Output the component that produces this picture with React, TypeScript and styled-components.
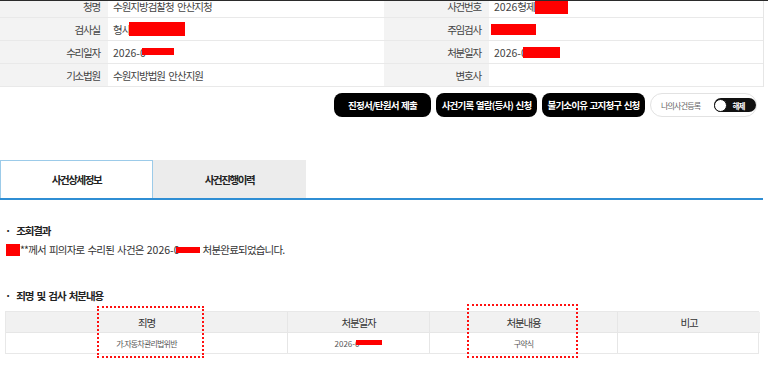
import { Fragment, type ReactNode } from 'react';
import styled, { createGlobalStyle } from 'styled-components';

const GlobalStyle = createGlobalStyle`
  body {
    margin: 0;
    background: #fff;
    font-family: 'Noto Sans CJK KR', 'Noto Sans', sans-serif;
    color: #333;
  }
`;

const Page = styled.div`
  position: relative;
  width: 768px;
  height: 376px;
  overflow: hidden;
  border-top: 1px solid #2b2b2b;
  box-sizing: border-box;
`;

const InfoTable = styled.div`
  display: grid;
  grid-template-columns: 108px 276px 105px 274px;
  width: 764px;
  margin-top: -6px;
  border-right: 1px solid #e6e6e6;
  box-sizing: border-box;
`;

const Label = styled.div`
  height: 22px;
  border-bottom: 1px solid #e9e9e9;
  background: #f3f3f3;
  display: flex;
  align-items: center;
  justify-content: flex-end;
  padding-right: 8px;
  font-size: 10.5px;
  letter-spacing: -1.2px;
  color: #444;
`;

const Value = styled.div`
  height: 22px;
  border-bottom: 1px solid #e9e9e9;
  display: flex;
  align-items: center;
  padding-left: 5px;
  font-size: 10.5px;
  letter-spacing: -1px;
  word-spacing: 2px;
  color: #444;
  white-space: pre;
`;

// digits keep their natural spacing
const Num = styled.span`
  letter-spacing: 0;
`;

const Redact = styled.span<{ $w: number; $h: number; $shift?: number; $dy?: number }>`
  display: inline-block;
  width: ${(p) => p.$w}px;
  height: ${(p) => p.$h}px;
  background: #ff0000;
  margin-left: ${(p) => p.$shift ?? 0}px;
  position: relative;
  top: ${(p) => p.$dy ?? 0}px;
  vertical-align: middle;
`;

const ActionBar = styled.div`
  display: flex;
  justify-content: flex-end;
  align-items: center;
  gap: 5px;
  padding: 6px 11px 0 0;
`;

const BlackButton = styled.button<{ $w: number }>`
  width: ${(p) => p.$w}px;
  height: 24px;
  padding: 0;
  border: none;
  border-radius: 8px;
  background: #000;
  color: #fff;
  font-family: inherit;
  font-size: 9.5px;
  font-weight: 700;
  letter-spacing: -0.8px;
  word-spacing: 1px;
  white-space: nowrap;
`;

const RegisterBox = styled.div`
  height: 24px;
  width: 107px;
  box-sizing: border-box;
  border: 1px solid #e2e2e2;
  border-radius: 12px;
  display: flex;
  align-items: center;
  padding-left: 10px;
  gap: 14px;
  font-size: 8px;
  letter-spacing: -0.8px;
  color: #666;
  white-space: nowrap;
`;

const Switch = styled.div`
  width: 43px;
  height: 14px;
  border-radius: 7px;
  background: #111;
  display: flex;
  align-items: center;
  box-sizing: border-box;
  gap: 5px;
`;

const Knob = styled.span`
  width: 13px;
  height: 13px;
  border-radius: 50%;
  background: #fff;
  border: 1px solid #111;
  box-sizing: border-box;
`;

const SwitchText = styled.span`
  color: #fff;
  font-size: 7.5px;
  font-weight: 700;
`;

const Tabs = styled.div`
  display: flex;
  width: 763px;
  margin-top: 43px;
  border-bottom: 2px solid #2f8ed4;
`;

const Tab = styled.div<{ $active?: boolean }>`
  width: 153px;
  height: 38px;
  box-sizing: border-box;
  display: flex;
  align-items: center;
  justify-content: center;
  font-size: 10.5px;
  font-weight: 700;
  letter-spacing: -1.4px;
  color: #222;
  background: ${(p) => (p.$active ? '#fff' : '#ececec')};
  border: ${(p) => (p.$active ? '1px solid #9ccbe9' : 'none')};
  border-bottom: none;
`;

const Section = styled.div`
  position: relative;
  display: flow-root;
  padding: 0 5px;
`;

const SectionTitle = styled.div<{ $top: number }>`
  margin-top: ${(p) => p.$top}px;
  font-size: 10.5px;
  font-weight: 700;
  letter-spacing: -1.1px;
  word-spacing: 2px;
  color: #222;
  line-height: 16px;
  &::before {
    content: '·';
    margin-right: 6px;
  }
`;

const Message = styled.div`
  margin-top: 3px;
  font-size: 10.5px;
  letter-spacing: -0.8px;
  word-spacing: 1.5px;
  color: #333;
  line-height: 16px;
  white-space: nowrap;
`;

const ResultTable = styled.div`
  display: grid;
  grid-template-columns: 282px 142px 188px 142px;
  width: 754px;
  margin-top: 7px;
  border: 1px solid #e8e8e8;
  box-sizing: border-box;
`;

const HeadCell = styled.div<{ $last?: boolean }>`
  height: 20px;
  background: #f1f1f1;
  border-bottom: 1px solid #e6e6e6;
  border-right: ${(p) => (p.$last ? 'none' : '1px solid #e6e6e6')};
  display: flex;
  align-items: center;
  justify-content: center;
  font-size: 10.5px;
  letter-spacing: -1.2px;
  color: #333;
`;

const DataCell = styled.div<{ $last?: boolean }>`
  height: 20px;
  border-right: ${(p) => (p.$last ? 'none' : '1px solid #e6e6e6')};
  display: flex;
  align-items: center;
  justify-content: center;
  font-size: 8px;
  letter-spacing: -0.8px;
  color: #555;
  white-space: nowrap;
`;

const Marker = styled.div<{ $x: number; $y: number; $w: number; $h: number }>`
  position: absolute;
  left: ${(p) => p.$x}px;
  top: ${(p) => p.$y}px;
  width: ${(p) => p.$w}px;
  height: ${(p) => p.$h}px;
  border: 2px dotted #ff1010;
  box-sizing: border-box;
  pointer-events: none;
`;

const rows: [string, ReactNode, string, ReactNode][] = [
  ['청명', '수원지방검찰청 안산지청', '사건번호', <><Num>2026</Num>형제<Redact $w={33} $h={14} $dy={1} /></>],
  ['검사실', <>형사<Redact $w={56} $h={14} $shift={-1} /></>, '주임검사', <Redact $w={45} $h={11} $shift={-3} />],
  ['수리일자', <><Num>2026-0</Num><Redact $w={32} $h={7} $shift={-4} $dy={-1} /></>, '처분일자', <><Num>2026-0</Num><Redact $w={37} $h={11} $shift={-4} /></>],
  ['기소법원', '수원지방법원 안산지원', '변호사', ''],
];

export default function App() {
  return (
    <>
      <GlobalStyle />
      <Page>
        <InfoTable>
          {rows.map(([l1, v1, l2, v2]) => (
            <Fragment key={l1}>
              <Label>{l1}</Label>
              <Value>{v1}</Value>
              <Label>{l2}</Label>
              <Value>{v2}</Value>
            </Fragment>
          ))}
        </InfoTable>

        <ActionBar>
          <BlackButton $w={97}>진정서/탄원서 제출</BlackButton>
          <BlackButton $w={101}>사건기록 열람(등사) 신청</BlackButton>
          <BlackButton $w={103}>불기소이유 고지청구 신청</BlackButton>
          <RegisterBox>
            나의사건등록
            <Switch>
              <Knob />
              <SwitchText>해제</SwitchText>
            </Switch>
          </RegisterBox>
        </ActionBar>

        <Tabs>
          <Tab $active>사건상세정보</Tab>
          <Tab>사건진행이력</Tab>
        </Tabs>

        <Section>
          <SectionTitle $top={23}>조회결과</SectionTitle>
          <Message>
            <Redact $w={14} $h={12} $shift={1} $dy={-1} />**께서 피의자로 수리된 사건은 <Num>2026-0</Num>
            <Redact $w={24} $h={6} $shift={-4} $dy={-1} /> 처분완료되었습니다.
          </Message>

          <SectionTitle $top={30}>죄명 및 검사 처분내용</SectionTitle>
          <ResultTable>
            <HeadCell>죄명</HeadCell>
            <HeadCell>처분일자</HeadCell>
            <HeadCell>처분내용</HeadCell>
            <HeadCell $last>비고</HeadCell>
            <DataCell>가.자동차관리법위반</DataCell>
            <DataCell>
              <Num>2026-0</Num>
              <Redact $w={26} $h={5} $shift={-3} $dy={-1} />
            </DataCell>
            <DataCell>구약식</DataCell>
            <DataCell $last />
          </ResultTable>
          <Marker $x={97} $y={106} $w={107} $h={52} />
          <Marker $x={467} $y={104} $w={111} $h={54} />
        </Section>
      </Page>
    </>
  );
}
